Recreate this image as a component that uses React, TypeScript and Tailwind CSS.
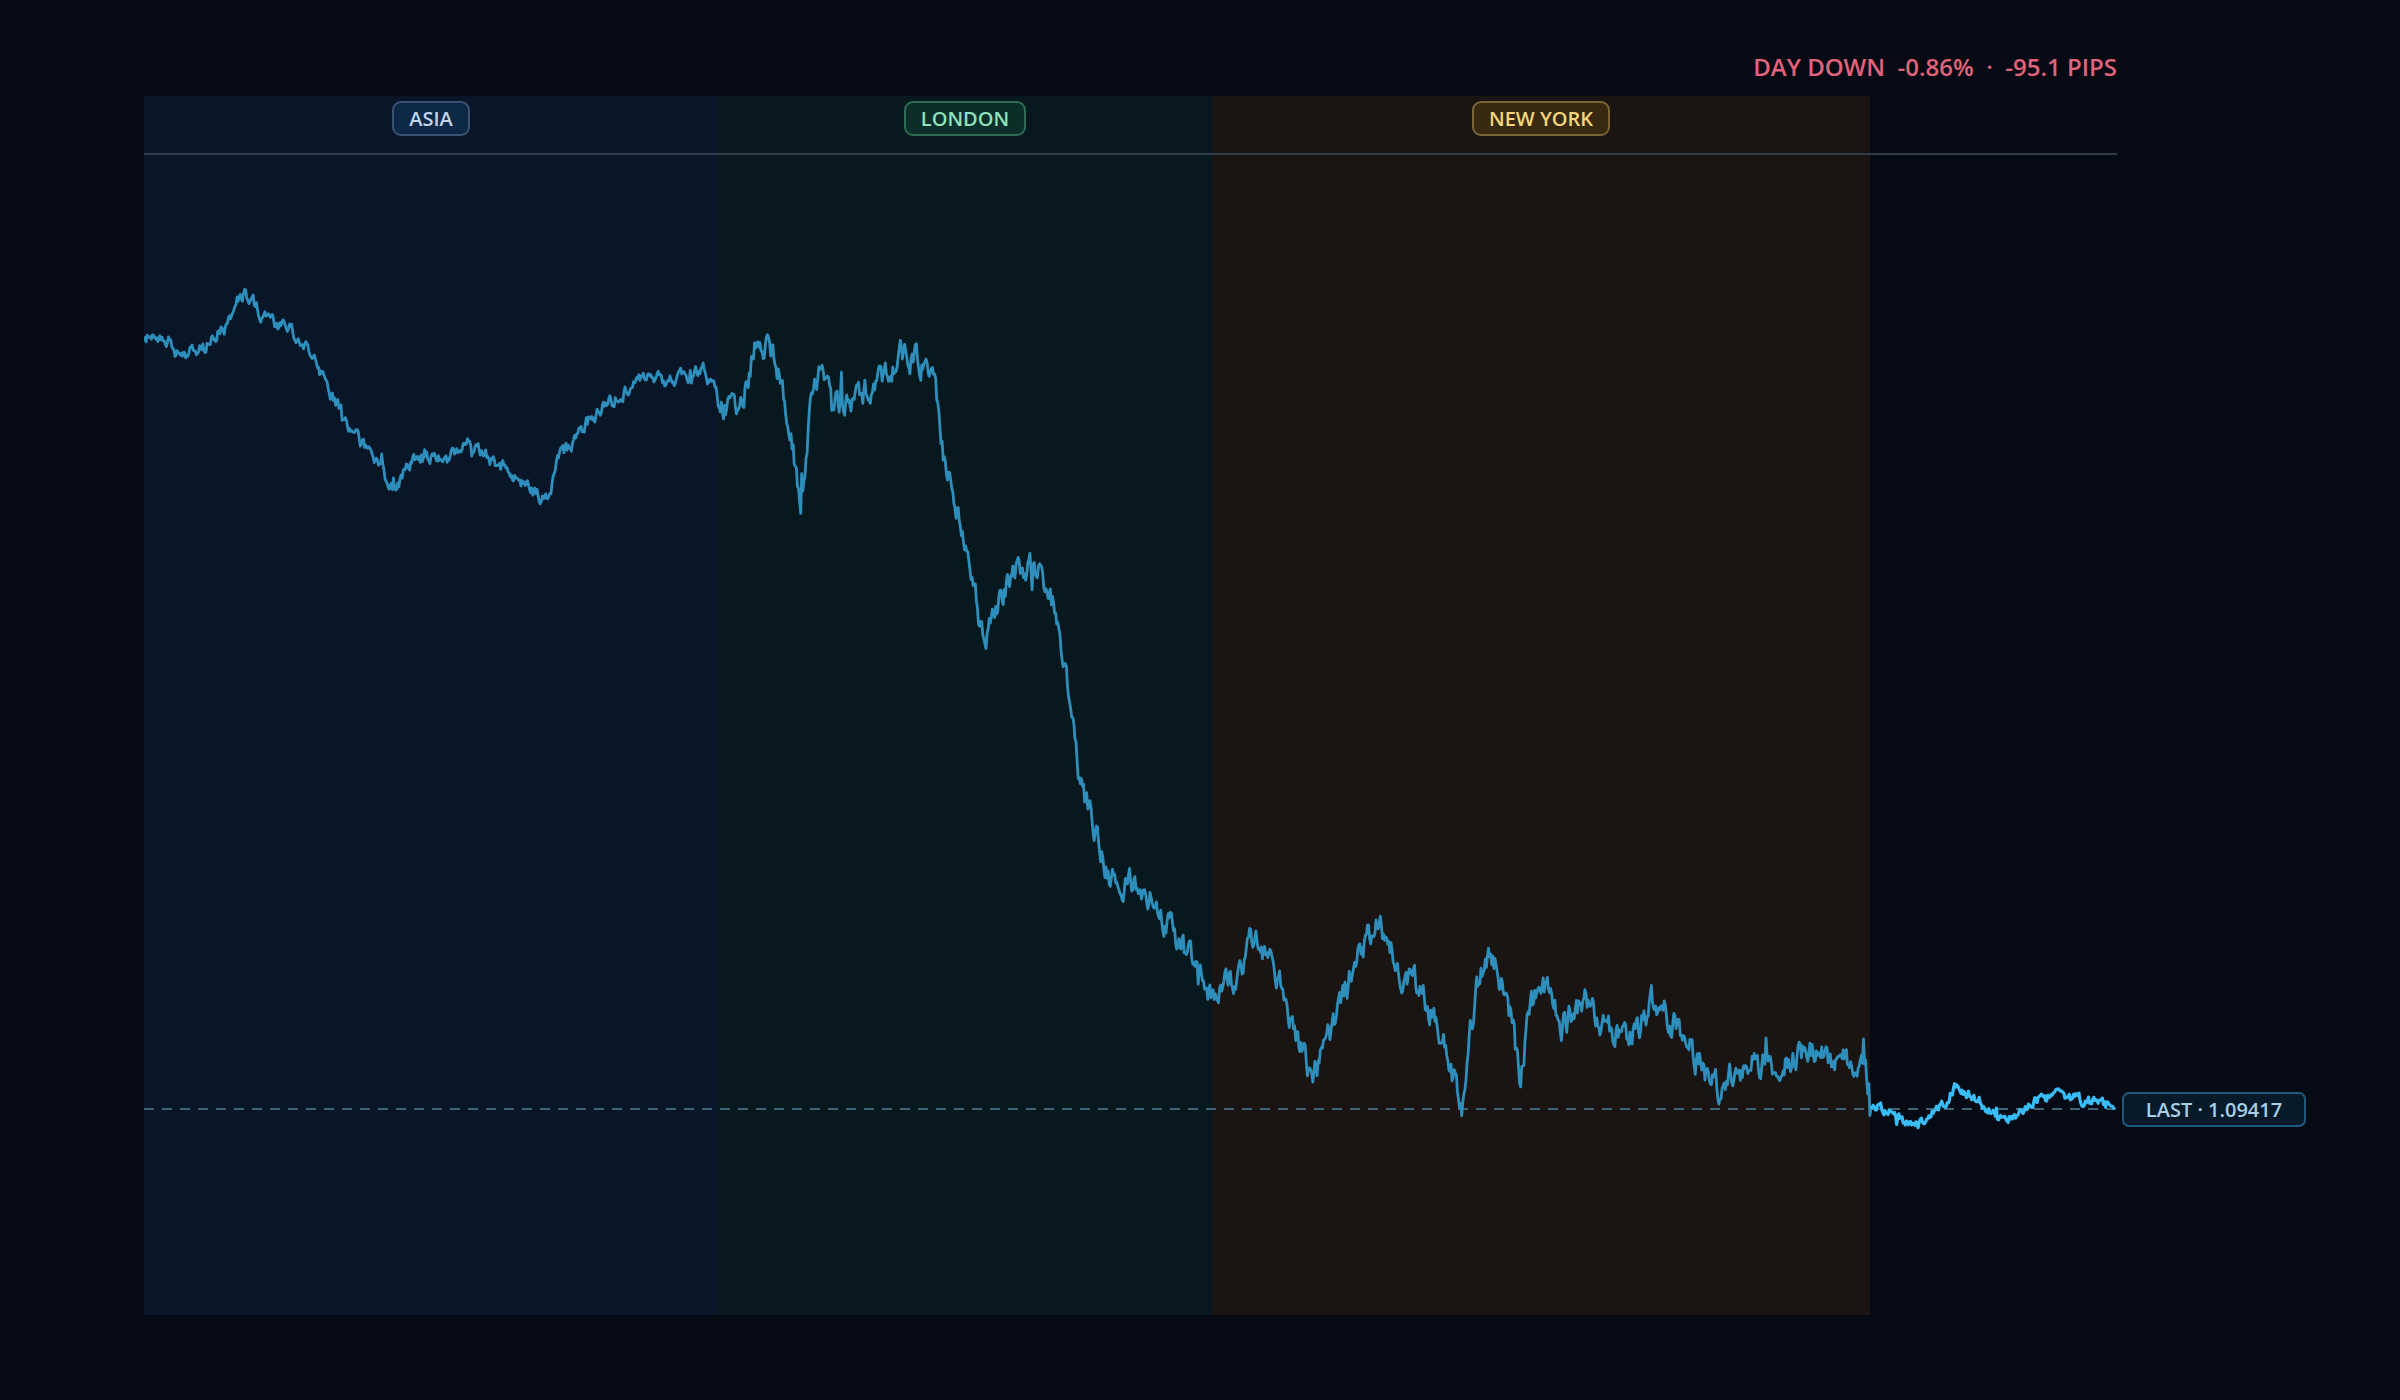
import React from "react";

const S = 1.5306;
const KP: [number, number][] = [
  [94, 220], [110, 222], [118, 235], [135, 225], [150, 210], [160, 192], [175, 210], [190, 215], [205, 235], [225, 275], [240, 295], [258, 320], [270, 298], [290, 302], [305, 290], [330, 305], [345, 318], [358, 328], [365, 300], [385, 275], [400, 262], [420, 245], [440, 250], [460, 240], [470, 265], [485, 260], [495, 222], [505, 230], [515, 270], [523, 330], [530, 265], [536, 240], [545, 262], [560, 258], [575, 250], [590, 230], [600, 235], [610, 250], [617, 300], [625, 330], [635, 380], [643, 425], [650, 395], [660, 378], [670, 370], [680, 375], [690, 400], [697, 440], [705, 510], [715, 540], [725, 575], [740, 578], [750, 585], [760, 600], [770, 615], [780, 630], [792, 650], [805, 640], [820, 612], [835, 640], [845, 670], [858, 705], [872, 665], [885, 630], [900, 600], [912, 630], [930, 650], [945, 685], [955, 725], [965, 640], [975, 625], [985, 650], [993, 705], [1000, 655], [1010, 645], [1020, 670], [1035, 655], [1050, 672], [1065, 680], [1080, 655], [1095, 670], [1110, 695], [1122, 712], [1140, 695], [1160, 695], [1180, 685], [1200, 695], [1217, 690], [1222, 720], [1235, 725], [1250, 738], [1265, 725], [1278, 710], [1292, 718], [1310, 732], [1325, 722], [1340, 716], [1360, 718], [1382, 722],
];

function rng(seed: number) {
  return () => {
    seed |= 0; seed = (seed + 0x6d2b79f5) | 0;
    let t = Math.imul(seed ^ (seed >>> 15), 1 | seed);
    t = (t + Math.imul(t ^ (t >>> 7), 61 | t)) ^ t;
    return ((t ^ (t >>> 14)) >>> 0) / 4294967296;
  };
}

function build() {
  const r = rng(11);
  const pts: [number, number][] = [];
  let n = 0;
  let k = 0;
  for (let x = 94; x <= 1382; x += 0.7) {
    while (k < KP.length - 2 && KP[k + 1][0] < x) k++;
    const [x0, y0] = KP[k];
    const [x1, y1] = KP[k + 1];
    const t = Math.min(1, Math.max(0, (x - x0) / (x1 - x0)));
    const base = y0 + (y1 - y0) * t;
    const amp = x > 1222 ? 2.6 : x > 792 ? 7 : x > 469 ? 6.5 : 3.4;
    n = n * 0.6 + (r() - 0.5) * amp * 2.2;
    let y = base + n;
    if (r() < 0.02) y += (r() - 0.5) * amp * 5;
    pts.push([(x * S) - 144, y * S - 96]);
  }
  return pts;
}

const PTS = build();
const split = PTS.findIndex((p) => p[0] >= 1870 - 144);
const toD = (a: [number, number][]) => a.map((p, i) => `${i ? "L" : "M"}${p[0].toFixed(1)} ${p[1].toFixed(1)}`).join("");
const D1 = toD(PTS.slice(0, split + 1));
const D2 = toD(PTS.slice(split));

function Badge({ label, cls }: { label: string; cls: string }) {
  return (
    <div className="flex h-[58px] items-start justify-center pt-[5px]">
      <span className={`flex h-[35px] items-center rounded-[9px] border-2 px-[15px] text-[20px] font-semibold ${cls}`}>{label}</span>
    </div>
  );
}

export default function App() {
  return (
    <div className="h-[1400px] w-[2400px] bg-[#060a14]" style={{ fontFamily: "'Open Sans', 'Noto Sans', sans-serif" }}>
      <div className="ml-[144px] w-[1973px]">
        <div className="flex h-[96px] items-start justify-end pt-[51px] text-[24px] font-semibold leading-[32px] text-[#e2637b]">
          <span>DAY DOWN&nbsp;&nbsp;-0.86%&nbsp;&nbsp;·&nbsp;&nbsp;-95.1 PIPS</span>
        </div>
        <div className="relative flex h-[1219px]">
          <div className="w-[574px] bg-[#081628]">
            <Badge label="ASIA" cls="border-[#3b5275] bg-[#0e2847] text-[#c3d4ea]" />
          </div>
          <div className="w-[494px] bg-[#07191e]">
            <Badge label="LONDON" cls="border-[#2f6b55] bg-[#0b2f28] text-[#8fe0bd]" />
          </div>
          <div className="w-[658px] bg-[#1a1513]">
            <Badge label="NEW YORK" cls="border-[#7a6435] bg-[#382a10] text-[#f4d67a]" />
          </div>
          <div className="flex-1" />
          <div className="absolute left-0 top-[57px] h-[2px] w-full bg-[#2f3a4b]" />
          <svg className="absolute left-0 top-0" width="1973" height="1219" viewBox="0 0 1973 1219">
            <line x1="0" y1="1013" x2="1973" y2="1013" stroke="#3d6577" strokeWidth="2" strokeDasharray="10 8" />
            <path d={D1} fill="none" stroke="#2e8fbd" strokeWidth="2.8" strokeLinejoin="round" />
            <path d={D2} fill="none" stroke="#38bdf8" strokeWidth="3.2" strokeLinejoin="round" />
          </svg>
          <div className="absolute left-[1978px] top-[996px] flex h-[35px] w-[184px] items-center justify-center rounded-[7px] border-2 border-[#1e5a7a] bg-[#071a2a] text-[20px] font-semibold text-[#a9cfe6]">
            LAST · 1.09417
          </div>
        </div>
      </div>
    </div>
  );
}
